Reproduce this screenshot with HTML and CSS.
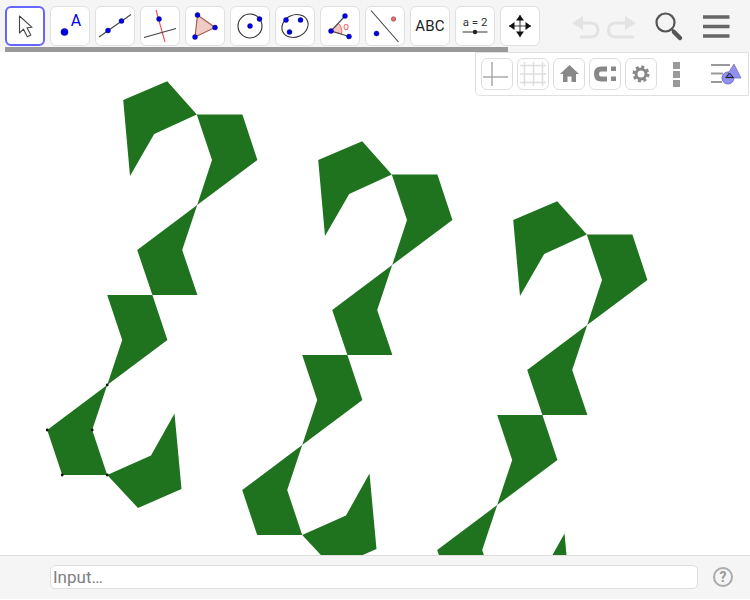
FILE: index.html
```html
<!DOCTYPE html>
<html lang="en">
<head>
<meta charset="utf-8">
<title>GeoGebra</title>
<link rel="stylesheet" href="styles.css">
</head>
<body>
<div class="app">
  <header class="toolbar">
    <div class="tool-row">
      <div class="tools">
        <button class="tool active"><svg viewBox="7 8 36 36"><path class="arrow" d="M19.5 16V33L23.5 29.2L27.3 36.8L30.8 35L27 27.8L32 27.3Z"/></svg></button>
        <button class="tool"><svg viewBox="51 7 38 38"><circle class="pt" cx="64.5" cy="32" r="3.6"/><text class="label" x="76" y="25.5">A</text></svg></button>
        <button class="tool"><svg viewBox="96 7 38 38"><path class="ln" d="M99 37L131 14.5"/><circle class="pt" cx="108" cy="30.5" r="2.5"/><circle class="pt" cx="121.5" cy="21" r="2.5"/></svg></button>
        <button class="tool"><svg viewBox="141 7 38 38"><path class="red" d="M156 10L165 42"/><path class="ln" d="M144 37.5L176 28.5"/><circle class="pt" cx="159" cy="19" r="2.5"/></svg></button>
        <button class="tool"><svg viewBox="186 7 38 38"><path class="tri" d="M197.5 15L215 27.5L195 37Z"/><circle class="pt" cx="197.5" cy="15" r="2.5"/><circle class="pt" cx="215" cy="27.5" r="2.5"/><circle class="pt" cx="195" cy="37" r="2.5"/></svg></button>
        <button class="tool"><svg viewBox="231 7 38 38"><circle class="ring" cx="250" cy="26" r="12"/><circle class="pt" cx="250" cy="26" r="2.5"/><circle class="pt" cx="259.5" cy="19" r="2.5"/></svg></button>
        <button class="tool"><svg viewBox="276 7 38 38"><ellipse class="ring" cx="295" cy="26" rx="13.5" ry="11" transform="rotate(-25 295 26)"/><circle class="pt" cx="286" cy="20" r="2.5"/><circle class="pt" cx="300.5" cy="20" r="2.5"/><circle class="pt" cx="289.5" cy="32" r="2.5"/></svg></button>
        <button class="tool"><svg viewBox="321 7 38 38"><path class="sector" d="M331 31L338.5 23.5A11 11 0 0 1 341.5 34Z"/><path class="ln" d="M345 16L331 31L349 36.5"/><circle class="pt" cx="345" cy="16" r="2.5"/><circle class="pt" cx="331" cy="31" r="2.5"/><circle class="pt" cx="349" cy="36.5" r="2.5"/><text class="alpha" x="346" y="30">o</text></svg></button>
        <button class="tool"><svg viewBox="366 7 38 38"><path class="ln" d="M371 10.5L398.5 42"/><circle class="pt" cx="376.5" cy="33.5" r="2.5"/><circle class="pt-red" cx="393.5" cy="19" r="2.2"/></svg></button>
        <button class="tool text-tool">ABC</button>
        <button class="tool"><svg viewBox="456 7 38 38"><text class="eq" x="475" y="26">a = 2</text><path class="ln" d="M462.5 32H487.5"/><circle class="knob" cx="475" cy="32" r="2.2"/></svg></button>
        <button class="tool"><svg viewBox="501 7 38 38"><path class="ln" d="M520 15V37M509 26H531"/><path class="head" d="M520 15L516 20.5H524ZM520 37L516 31.5H524ZM509 26L514.5 22V30ZM531 26L525.5 22V30Z"/></svg></button>
      </div>
      <div class="actions">
        <svg class="act-undo" viewBox="568 6 36 40"><path class="faded" d="M578 23H590Q598 23 598 30Q598 37 590 37H580"/><path class="faded-fill" d="M572 23L583 16V30Z"/></svg>
        <svg class="act-undo" viewBox="604 6 36 40"><path class="faded" d="M630 23H616Q608.5 23 608.5 30Q608.5 37 616 37H634"/><path class="faded-fill" d="M636 23L625 16V30Z"/></svg>
        <svg class="act-search" viewBox="640 6 46 40"><circle class="lens" cx="665.5" cy="22.5" r="9"/><path class="neck" d="M671.5 29L674 31.5"/><path class="handle" d="M674 32L680 38"/></svg>
        <svg class="act-menu" viewBox="686 6 50 40"><path class="bars" d="M703 17H729.5M703 26.5H729.5M703 36H729.5"/></svg>
      </div>
    </div>
    <div class="scrollbar"></div>
  </header>

  <main class="canvas">
    <svg class="drawing" viewBox="0 52 750 503">
      <defs>
        <g id="chain">
          <polygon points="123.2,100 167.2,81.2 196.8,114.5 154.2,134 130,176"/>
          <polygon points="196.8,114.5 242.4,114.5 257.4,160 197.2,205 212,160"/>
          <polygon points="197.2,205 182.2,250 197.4,295 152.4,295 137.2,250"/>
          <polygon points="107.2,295 152.4,295 167.4,340 107.2,385 122.2,340"/>
          <polygon points="107.2,385 92.2,430 107.2,475 62.2,475 47.2,430"/>
          <polygon points="107.2,475 151,455.5 174.5,413.5 181.5,489 138,508"/>
        </g>
      </defs>
      <use href="#chain" class="chain"/>
      <use href="#chain" class="chain" x="195" y="60"/>
      <use href="#chain" class="chain" x="390" y="120"/>
      <g class="vertices">
        <circle cx="107.2" cy="385" r="1.4"/>
        <circle cx="92.2" cy="430" r="1.4"/>
        <circle cx="107.2" cy="475" r="1.4"/>
        <circle cx="62.2" cy="475" r="1.4"/>
        <circle cx="47.2" cy="430" r="1.4"/>
      </g>
    </svg>

    <div class="style-panel">
      <button class="style-btn"><svg viewBox="482 59 30 30"><path class="axis" d="M492 62V86M483 77H508"/></svg></button>
      <button class="style-btn"><svg viewBox="518 59 30 30"><path class="grid" d="M524.5 62V86M533.5 62V86M542.5 62V86M520 65.5H546M520 74H546M520 82.5H546"/></svg></button>
      <button class="style-btn"><svg viewBox="554 59 30 30"><path class="solid" d="M569.5 65L579 74H576V82H571.5V76.5H567.5V82H563V74H560Z"/></svg></button>
      <button class="style-btn"><svg viewBox="590 59 30 30"><path class="magnet" d="M607 69H601Q596.5 69 596.5 74Q596.5 79 601 79H607"/><path class="solid" d="M611 66.5H616V71H611ZM611 76.5H616V81H611Z"/></svg></button>
      <button class="style-btn"><svg viewBox="626 59 30 30"><circle class="gear-teeth" cx="641" cy="74" r="7"/><circle class="gear-ring" cx="641" cy="74" r="5"/></svg></button>
      <div class="kebab"><span></span><span></span><span></span></div>
      <svg class="style-icon" viewBox="708 59 35 30">
        <path class="style-lines" d="M711 65H730M711 73.5H723M711 82H722"/>
        <circle class="blob" cx="728" cy="78" r="6"/>
        <path class="blob-tri" d="M734 64L741 78H725Z"/>
        <path class="blob-in" d="M729.5 73L726 77.5H733.5Z"/>
      </svg>
    </div>
  </main>

  <footer class="inputbar">
    <input class="input" type="text" placeholder="Input…">
    <svg class="help" viewBox="0 0 20 20"><circle class="help-ring" cx="10" cy="10" r="9"/><text class="help-mark" x="10" y="15">?</text></svg>
  </footer>
</div>
</body>
</html>
```

FILE: styles.css
```css
* { box-sizing: border-box; }
html, body { margin: 0; height: 100%; }
body { font-family: "Roboto", "Liberation Sans", sans-serif; background: #fff; overflow: hidden; }

.app { display: flex; flex-direction: column; height: 599px; width: 750px; }

/* Top toolbar */
.toolbar { background: #f5f5f5; padding-top: 6px; flex: none; }
.tool-row { display: flex; height: 40px; }
.tools { display: flex; gap: 5px; padding-left: 5px; }
.tool {
  width: 40px; height: 40px; padding: 0; background: #fff;
  border: 1px solid #e0e0e0; border-radius: 6px;
  display: flex; align-items: center; justify-content: center;
}
.tool svg { width: 38px; height: 38px; display: block; }
.tool.active { border: 2px solid #6666ff; }
.tool.active svg { width: 36px; height: 36px; }
.text-tool { font: 15px "Roboto", sans-serif; color: #222; letter-spacing: .2px; }
.scrollbar { width: 503px; height: 5px; margin: 1px 0 0 5px; background: #999; }

.actions { display: flex; margin-left: 28px; }
.act-undo { width: 36px; height: 40px; }
.act-search { width: 46px; height: 40px; }
.act-menu { width: 50px; height: 40px; }

/* Toolbar icon strokes */
.arrow { fill: #fff; stroke: #444; stroke-width: 1.1; stroke-linejoin: round; }
.pt { fill: #0000e6; stroke: #00006e; stroke-width: .4; }
.pt-red { fill: #f26a6a; stroke: #6e2020; stroke-width: .5; }
.label { fill: #0000e6; font: 400 16px "Roboto", sans-serif; text-anchor: middle; }
.ln { fill: none; stroke: #444; stroke-width: 1.1; }
.red { fill: none; stroke: #f05050; stroke-width: 1.1; }
.tri { fill: #f0cbc4; stroke: #a5604f; stroke-width: 1.2; }
.ring { fill: none; stroke: #333; stroke-width: 1.1; }
.sector { fill: #f4c6c0; stroke: #ef6a6a; stroke-width: 1; }
.alpha { fill: #ef5a5a; font: 10px "Roboto", sans-serif; text-anchor: middle; }
.eq { fill: #333; font: 11.5px "Roboto", sans-serif; text-anchor: middle; }
.knob { fill: #222; }
.head { fill: #111; }
.faded { fill: none; stroke: #e3e3e3; stroke-width: 3; }
.faded-fill { fill: #e3e3e3; }
.lens { fill: none; stroke: #555; stroke-width: 2.2; }
.neck { fill: none; stroke: #555; stroke-width: 2; }
.handle { fill: none; stroke: #555; stroke-width: 4.5; stroke-linecap: round; }
.bars { fill: none; stroke: #666; stroke-width: 3.3; }

/* Drawing area */
.canvas { position: relative; flex: 1; min-height: 0; overflow: hidden; background: #fff; }
.drawing { display: block; width: 750px; height: 503px; }
.chain { fill: #1f731f; }
.vertices { fill: #111; }

/* Style panel floating over the drawing */
.style-panel {
  position: absolute; top: 0; left: 475px; width: 274px; height: 44px;
  display: flex; align-items: center; padding: 0 5px; gap: 4px;
  background: #fff; border: 1px solid #e0e0e0; border-radius: 0 0 0 5px;
}
.style-btn {
  flex: none; width: 32px; height: 32px; padding: 0; background: #fff;
  border: 1px solid #ddd; border-radius: 6px;
}
.style-btn svg { width: 30px; height: 30px; display: block; }
.axis { fill: none; stroke: #aaa; stroke-width: 1.5; }
.grid { fill: none; stroke: #ddd; stroke-width: 1.5; }
.solid { fill: #888; }
.magnet { fill: none; stroke: #888; stroke-width: 5; }
.gear-teeth { fill: none; stroke: #888; stroke-width: 3; stroke-dasharray: 3 2.5; }
.gear-ring { fill: none; stroke: #888; stroke-width: 3; }
.kebab { flex: none; display: flex; flex-direction: column; gap: 2px; margin-left: 12px; width: 7px; }
.kebab span { display: block; height: 7px; background: #999; }
.style-icon { width: 35px; height: 30px; margin-left: 24px; flex: none; }
.style-lines { fill: none; stroke: #999; stroke-width: 2; }
.blob { fill: #9090ee; stroke: #7070c8; stroke-width: 1; }
.blob-tri { fill: #9090ee; stroke: #7777bb; stroke-width: .8; }
.blob-in { fill: #6a6adf; stroke: #222; stroke-width: 1; }

/* Input bar */
.inputbar {
  flex: none; height: 44px; display: flex; align-items: center;
  background: #f5f5f5; border-top: 1px solid #ddd; padding: 0 0 1px 50px;
}
.input {
  width: 648px; height: 24px; padding: 0 2px; background: #fff; outline: none;
  border: 1px solid #ddd; border-radius: 5px;
  font: 17px "Roboto", sans-serif; color: #333;
}
.input::placeholder { color: #808080; opacity: 1; }
.help { width: 20px; height: 20px; margin-left: 15px; flex: none; }
.help-ring { fill: none; stroke: #aaa; stroke-width: 2; }
.help-mark { fill: #999; font: 700 14px "Roboto", sans-serif; text-anchor: middle; }
```
